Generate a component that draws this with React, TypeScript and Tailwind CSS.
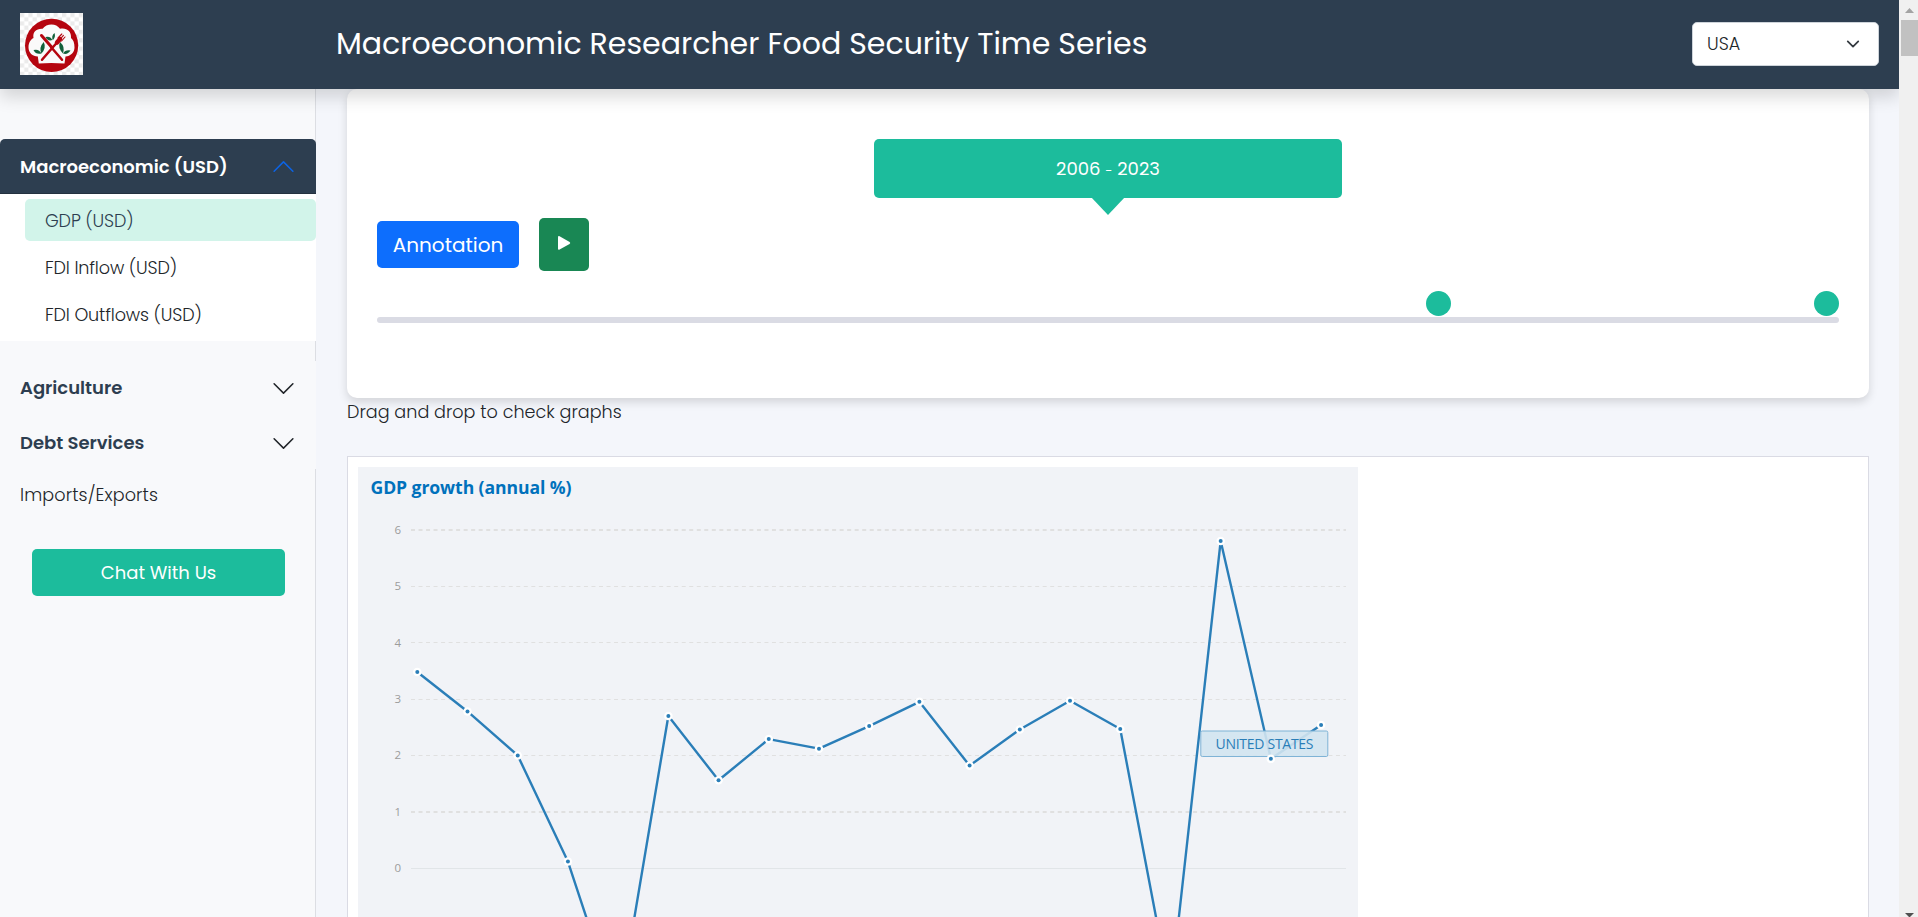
const growth = [
  3.48, 2.78, 2.0, 0.12, -2.58, 2.7, 1.56, 2.29, 2.12, 2.52, 2.95, 1.82, 2.46, 2.97, 2.47, -2.21, 5.8, 1.94, 2.54,
];
const px = (i: number) => 59.3 + i * 50.21;
const py = (v: number) => 401.3 - v * 56.42;

function Logo() {
  return (
    <svg width="63" height="62" viewBox="0 0 63 62" role="img" aria-label="Logo">
      <defs>
        <pattern id="check" width="8.4" height="8.4" patternUnits="userSpaceOnUse">
          <rect width="8.4" height="8.4" fill="#fff" />
          <rect width="4.2" height="4.2" fill="#ebebeb" />
          <rect x="4.2" y="4.2" width="4.2" height="4.2" fill="#ebebeb" />
        </pattern>
      </defs>
      <rect width="63" height="62" fill="url(#check)" />
      <circle cx="31.6" cy="32.4" r="26.6" fill="#b5050f" />
      <path
        d="M18.8 50.5L17.8 43.5C12.5 43.5 8.5 39.5 8.5 34.5C8.5 29 11 26.5 13.5 25C12.6 19 16 15.5 22.6 15.8C24.5 13 28 11.5 31.5 11.5C35 11.5 38 13 40 15.8C46.5 14.5 51.5 18 51 25C53.5 27 54.5 30 54.5 34.5C54.5 39.5 50.5 43.2 45.5 43.5L44.5 50.5Q31 49.5 18.8 50.5Z"
        fill="#fafafa"
      />
      <g fill="#12603a">
        <path d="M25.5 24Q30 22.5 32.5 27Q27.5 28.5 25.5 24Z" />
        <path d="M34.5 20Q36 24 32.8 27.2Q31 23 34.5 20Z" />
        <path d="M23.8 29Q26.5 35 21.5 40.5Q18.5 34.5 23.8 29Z" />
        <path d="M13.5 37Q19 35.5 21.5 40.5Q16 42 13.5 37Z" />
        <path d="M40 29Q37.5 35 43 40.5Q45.5 34 40 29Z" />
        <path d="M50.5 37.5Q45.5 36.5 43 40.5Q47.5 42 50.5 37.5Z" />
      </g>
      <g stroke="#b5050f" strokeLinecap="round" fill="none">
        <path d="M21.5 22.5L32 34.5" strokeWidth="3" />
        <path d="M31 34L42 46.8" strokeWidth="2.5" />
        <path d="M22 46.8L37 29.5" strokeWidth="2.5" />
        <path d="M37 29.5L40 26" strokeWidth="4.4" />
        <path d="M38 25L41.8 21M40 26.4L43.4 22.4M41.6 28L45 24" strokeWidth="1.1" />
      </g>
    </svg>
  );
}

function Chevron({ up = false, color = "#212529" }: { up?: boolean; color?: string }) {
  return (
    <svg width="25" height="25" viewBox="0 0 16 16" className={up ? "rotate-180" : ""} fill={color}>
      <path
        fillRule="evenodd"
        d="M1.646 4.646a.5.5 0 0 1 .708 0L8 10.293l5.646-5.647a.5.5 0 0 1 .708.708l-6 6a.5.5 0 0 1-.708 0l-6-6a.5.5 0 0 1 0-.708z"
      />
    </svg>
  );
}

function Section({ label }: { label: string }) {
  return (
    <button className="relative -mr-px flex h-[54px] items-center justify-between bg-[#f8f9fb] pr-5 pl-5 text-lg font-semibold text-[#2d3e50] last:pt-0.5">
      {label}
      <Chevron />
    </button>
  );
}

function Sidebar() {
  return (
    <aside className="flex w-[316px] shrink-0 flex-col border-r border-[#dcdee3] bg-[#f8f9fb] pt-[50px]">
      <button className="-mr-px flex h-[55px] items-center justify-between rounded-t-[5px] bg-[#2d3e50] pr-5 pl-5 text-lg font-semibold text-white shadow-[inset_0_-1px_0_#24313f]">
        Macroeconomic (USD)
        <Chevron up color="#0c63e4" />
      </button>
      <nav className="-mr-px flex h-[147px] flex-col gap-[5px] bg-white pt-[5px] pl-[25px] text-[17.6px] font-light tracking-[-0.14px] text-[#212529]">
        <a className="flex h-[42px] items-center rounded-[5px] bg-[#d2f4ea] pt-0.5 pl-5 text-[#2d3e50]">GDP (USD)</a>
        <a className="flex h-[42px] items-center pt-0.5 pl-5">FDI Inflow (USD)</a>
        <a className="flex h-[42px] items-center pt-0.5 pl-5">FDI Outflows (USD)</a>
      </nav>
      <div className="mt-5 flex flex-col">
        <Section label="Agriculture" />
        <Section label="Debt Services" />
      </div>
      <a className="flex h-[51px] items-center pt-0.5 pl-5 text-[17.6px] font-light tracking-[0.12px] text-[#212529]">
        Imports/Exports
      </a>
      <button className="mt-[29px] ml-8 h-[47px] w-[253px] rounded-[5px] bg-[#1cbc9c] text-lg text-white">
        Chat With Us
      </button>
    </aside>
  );
}

function RangeCard() {
  return (
    <section className="flex h-[309px] shrink-0 flex-col rounded-[10px] bg-white px-[30px] pt-[50px] shadow-[0_4px_10px_rgba(0,0,0,0.14)]">
      <div className="relative ml-[497px] flex h-[59px] w-[468px] items-center justify-center rounded-[5px] bg-[#1cbc9c] text-lg text-white">
        <span>
          2006 <span className="text-[13px]">-</span> 2023
        </span>
        <svg width="34" height="18" className="absolute top-[58px] left-[217px]">
          <path d="M0 0H34L17 18Z" fill="#1cbc9c" />
        </svg>
      </div>
      <div className="mt-5 flex h-[53px] items-center gap-5">
        <button className="h-[47px] w-[142px] rounded-[5px] bg-[#0d6efd] text-xl text-white">Annotation</button>
        <button className="flex h-[53px] w-[50px] items-center justify-center rounded-[5px] bg-[#198754]">
          <svg width="14" height="16" viewBox="0 0 14 16" className="mb-[3px]">
            <path d="M1 2.2Q1 .6 2.6 1.2L12.6 7Q13.9 8 12.6 9L2.6 14.6Q1 15.3 1 13.8Z" fill="#fff" />
          </svg>
        </button>
      </div>
      <div className="relative mt-[46px] h-[6px] rounded-[3px] bg-[#dadbe4]">
        <span className="absolute top-[-26px] left-[1049px] h-[25px] w-[25px] rounded-full bg-[#1cbc9c]" />
        <span className="absolute top-[-26px] right-0 h-[25px] w-[25px] rounded-full bg-[#1cbc9c]" />
      </div>
    </section>
  );
}

function Chart() {
  const line = growth.map((v, i) => `${px(i)},${py(v)}`).join(" ");
  return (
    <svg width="1000" height="620" className="block shrink-0 bg-[#f1f3f7] font-['Open_Sans',sans-serif]">
      <text x="12.5" y="27" fontSize="17.6" fontWeight="700" fill="#0071bc" textLength="201">
        GDP growth (annual %)
      </text>
      {[1, 2, 3, 4, 5, 6].map((v) => {
        const wide = v === 1 || v === 6;
        const y = wide ? Math.round(py(v)) : Math.floor(py(v)) + 0.5;
        return (
          <line
            key={v}
            x1="53"
            x2="988"
            y1={y}
            y2={y}
            stroke="#e0e0e0"
            strokeWidth={wide ? 2 : 1}
            strokeDasharray="4 3.52"
          />
        );
      })}
      <line x1="53" x2="988" y1="401.5" y2="401.5" stroke="#e1e5e8" />
      {[0, 1, 2, 3, 4, 5, 6].map((v) => (
        <text key={v} x="43" y={py(v) + 4} fontSize="11.5" textAnchor="end" fill="#9c9c9c">
          {v}
        </text>
      ))}
      <polyline points={line} fill="none" stroke="#2a7eb8" strokeWidth="2.4" strokeLinejoin="round" />
      <rect x="842.8" y="264" width="127" height="25.5" rx="1.5" fill="#d2e4f0" fillOpacity="0.9" stroke="#7fb3d6" />
      {growth.map((v, i) => (
        <g key={i}>
          <circle cx={px(i)} cy={py(v)} r="4.3" fill="#fff" />
          <circle cx={px(i)} cy={py(v)} r="2" fill="#2a7eb8" />
        </g>
      ))}
      <text x="857.5" y="281.7" fontSize="14" fill="#2a7eb8" textLength="98">
        UNITED STATES
      </text>
    </svg>
  );
}

export default function App() {
  return (
    <div className="flex h-[917px] w-[1918px] overflow-hidden bg-[#f4f6fb] font-['Poppins',Inter,sans-serif] text-[#212529]">
      <div className="flex w-[1899px] shrink-0 flex-col overflow-hidden">
        <header className="relative z-10 flex h-[89px] shrink-0 items-center bg-[#2d3e50] pr-5 pb-px pl-5 shadow-[0_8px_16px_rgba(0,0,0,0.15)]">
          <Logo />
          <h1 className="ml-[253px] pb-px text-[30px] leading-none text-white">
            Macroeconomic Researcher Food Security Time Series
          </h1>
          <button className="ml-auto flex h-[44px] w-[187px] items-center justify-between rounded-[5px] border border-[#ced4da] bg-white pr-[18px] pl-[14px] text-[17.6px] font-light">
            USA
            <svg width="14" height="14" viewBox="0 0 16 16" fill="none" stroke="#343a40" strokeWidth="2">
              <path d="m2 5 6 6 6-6" strokeLinecap="round" strokeLinejoin="round" />
            </svg>
          </button>
        </header>
        <div className="flex min-h-0 grow">
          <Sidebar />
          <main className="flex grow flex-col overflow-hidden pr-[30px] pl-[31px]">
            <RangeCard />
            <p className="h-[58px] shrink-0 text-[17.6px] leading-[29px] font-light">Drag and drop to check graphs</p>
            <div className="flex h-[640px] shrink-0 border border-[#dadbe4] bg-white pt-[10px] pl-[10px]">
              <Chart />
            </div>
          </main>
        </div>
      </div>
      <div className="flex w-[19px] shrink-0 flex-col items-end bg-[#f0f0f0]">
        <svg width="17" height="20">
          <path d="M4 13L8.5 8L13 13Z" fill="#a3a3a3" />
        </svg>
        <div className="h-9 w-[17px] bg-[#c1c1c1]" />
        <svg width="17" height="6" className="mt-auto">
          <path d="M4 2H13L8.5 6.5Z" fill="#505050" />
        </svg>
      </div>
    </div>
  );
}
